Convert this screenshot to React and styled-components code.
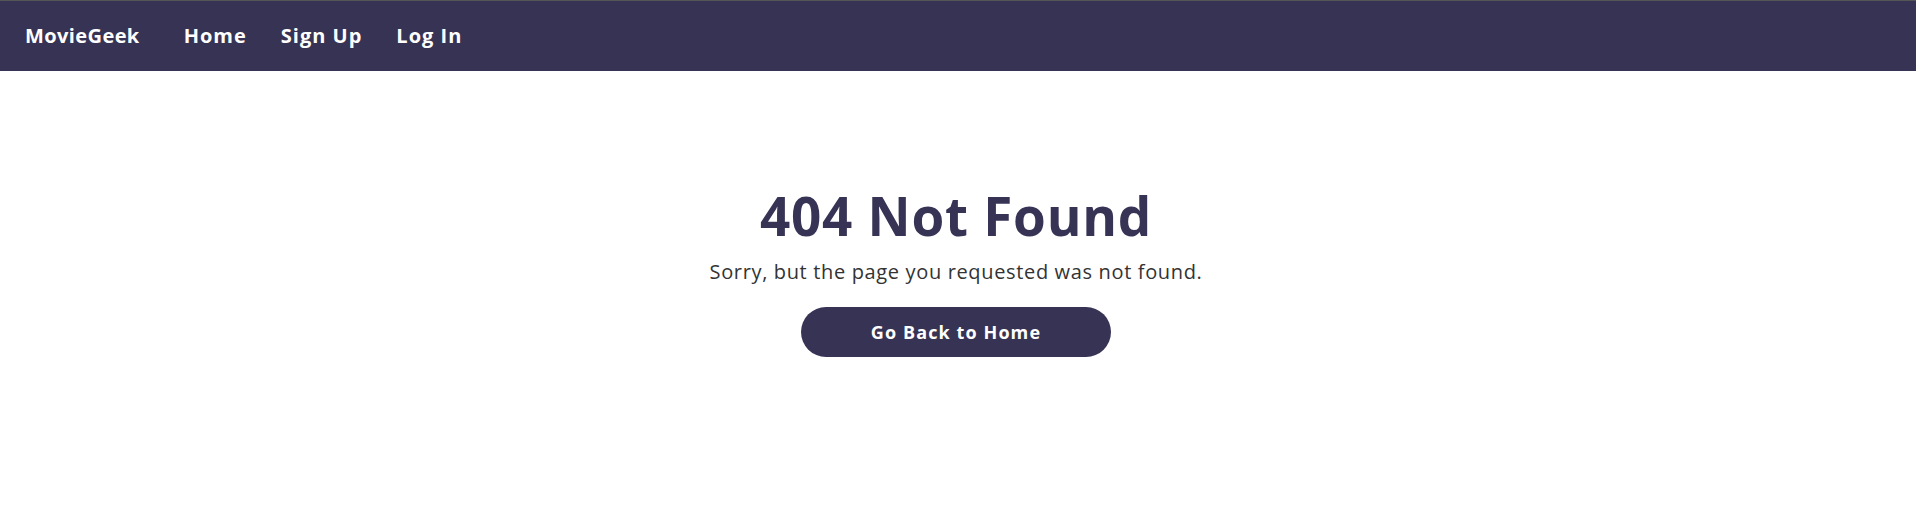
import React from "react";
import styled, { createGlobalStyle } from "styled-components";

const Global = createGlobalStyle`
  html, body { margin: 0; padding: 0; background: #fff; }
  body { font-family: "Open Sans", "Noto Sans", sans-serif; }
`;

const NavBar = styled.nav`
  box-sizing: border-box;
  height: 71px;
  border-top: 1px solid #555;
  background: #363355;
  display: flex;
  align-items: center;
  padding-left: 25px;
  padding-bottom: 2px;
`;

const Brand = styled.a`
  color: #fff;
  font-weight: 700;
  font-size: 20px;
  letter-spacing: 0.4px;
  text-decoration: none;
  margin-right: 44px;
`;

const NavLinks = styled.div`
  display: flex;
  gap: 34px;
`;

const NavLink = styled.a`
  color: #fff;
  font-weight: 700;
  font-size: 20px;
  letter-spacing: 1px;
  text-decoration: none;
`;

const Main = styled.main`
  display: flex;
  flex-direction: column;
  align-items: center;
  padding-top: 113px;
  padding-right: 4px;
`;

const Title = styled.h1`
  margin: 0;
  color: #363355;
  font-size: 53px;
  font-weight: 700;
  letter-spacing: 0.75px;
  line-height: 64px;
`;

const Message = styled.p`
  margin: 10px 0 21px;
  color: #333;
  font-size: 20px;
  letter-spacing: 0.65px;
  line-height: 28px;
`;

const HomeButton = styled.a`
  display: flex;
  align-items: center;
  justify-content: center;
  width: 310px;
  height: 50px;
  border-radius: 25px;
  background: #363355;
  color: #fff;
  font-weight: 700;
  font-size: 18px;
  letter-spacing: 1.1px;
  text-decoration: none;
`;

export default function App() {
  return (
    <>
      <Global />
      <NavBar>
        <Brand href="#">MovieGeek</Brand>
        <NavLinks>
          <NavLink href="#">Home</NavLink>
          <NavLink href="#">Sign Up</NavLink>
          <NavLink href="#">Log In</NavLink>
        </NavLinks>
      </NavBar>
      <Main>
        <Title>404 Not Found</Title>
        <Message>Sorry, but the page you requested was not found.</Message>
        <HomeButton href="#">Go Back to Home</HomeButton>
      </Main>
    </>
  );
}
